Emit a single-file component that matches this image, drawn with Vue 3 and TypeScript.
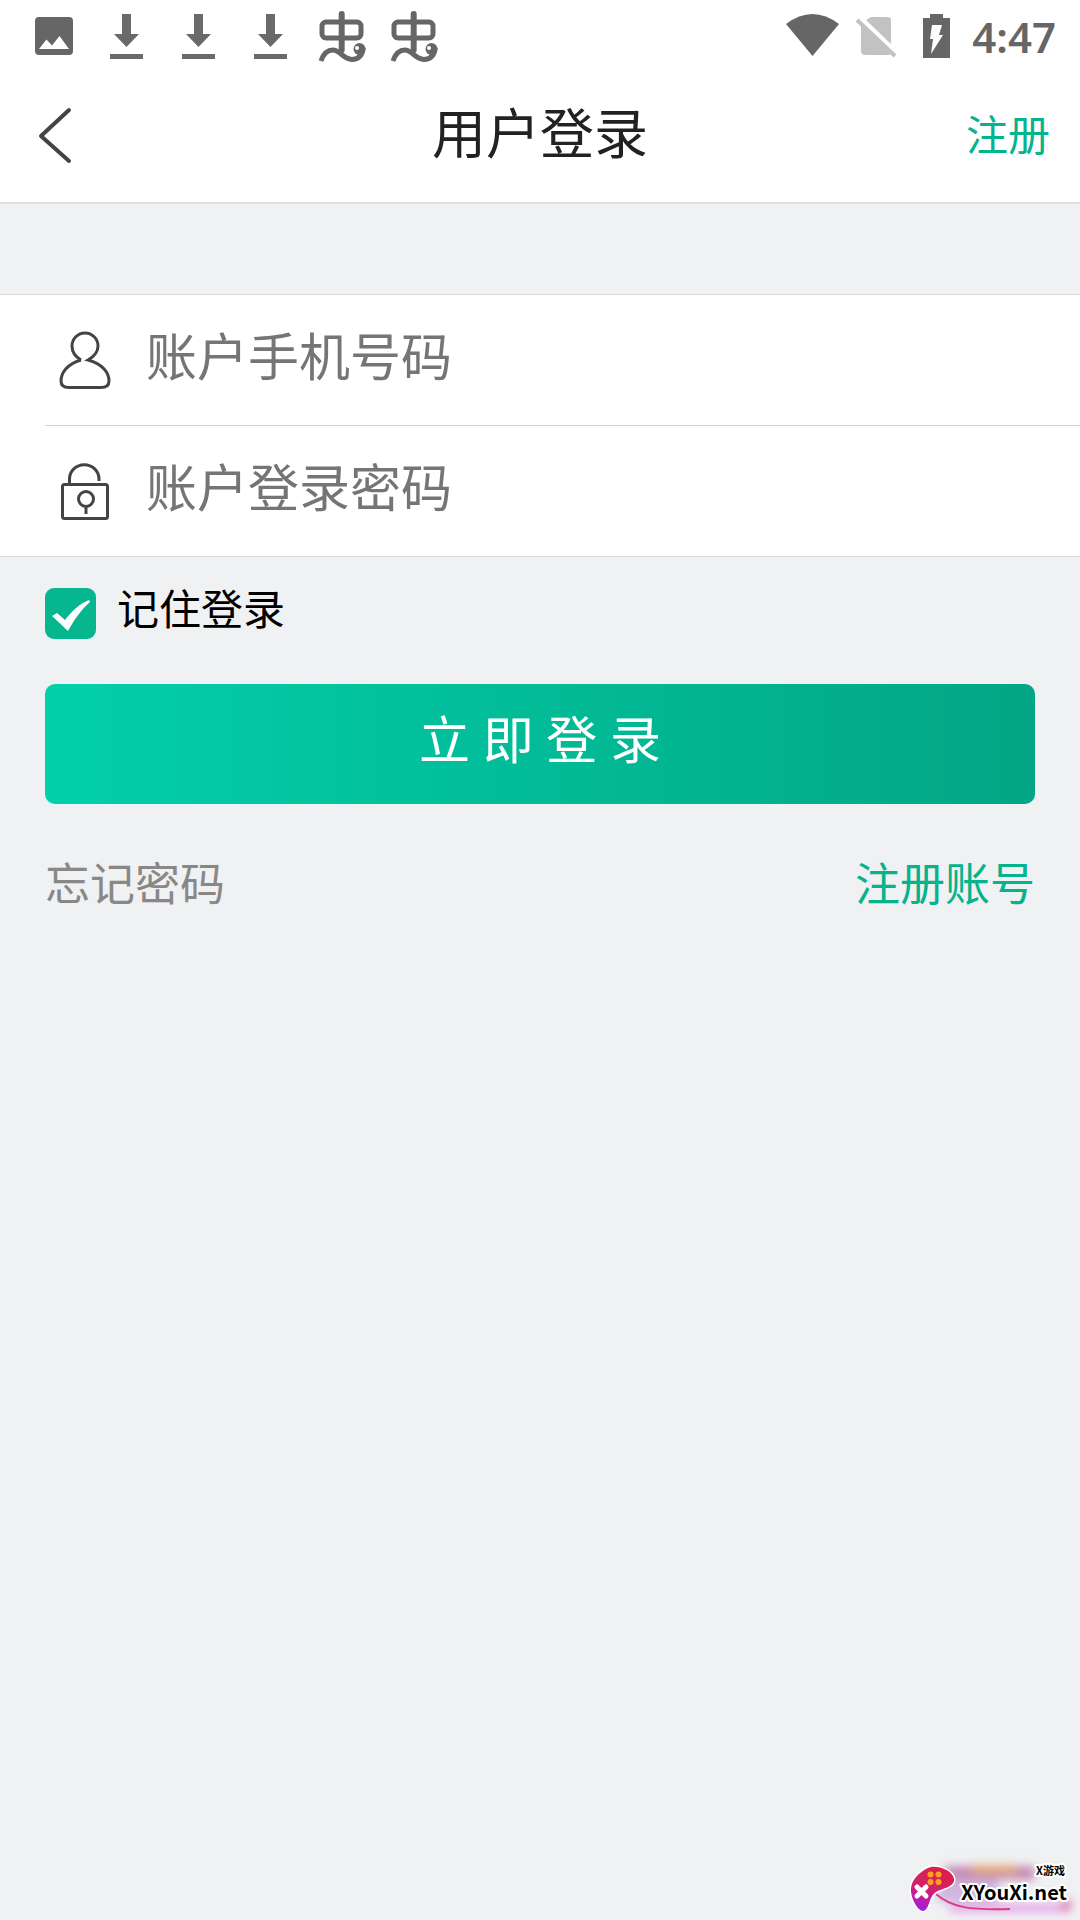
<script setup lang="ts">
import { ref } from 'vue'

const phone = ref('')
const password = ref('')
const remember = ref(true)
const downloads = [1, 2, 3]
const debugNotices = [1, 2]
</script>

<template>
  <div class="page">
    <div class="status">
      <div class="status-side">
        <svg class="cell" viewBox="0 0 72 72" aria-hidden="true">
          <path fill="#666" fill-rule="evenodd" d="M21 17h30a4 4 0 0 1 4 4v30a4 4 0 0 1-4 4H21a4 4 0 0 1-4-4V21a4 4 0 0 1 4-4ZM21 49H51L41.500 36 34 45.500 28.500 39.500Z" />
        </svg>
        <svg v-for="n in downloads" :key="n" class="cell" viewBox="0 0 72 72" aria-hidden="true">
          <path fill="#6a6a6a" d="M32 14h9v20h8L36.500 47 24 34h8ZM20 54h33v5H20Z" />
        </svg>
        <svg v-for="n in debugNotices" :key="n" class="cell" viewBox="0 0 72 72" aria-hidden="true">
          <g fill="none" stroke="#666" stroke-width="5" stroke-linecap="round">
            <rect x="16" y="22" width="39" height="16" rx="4" />
            <path d="M35.700 14V50" stroke-width="6" />
            <path d="M15 61C18 52 23 50 27 50C34 50 37 59 46 59.500C53 59.500 57 54 57 48" stroke-linecap="butt" />
          </g>
          <circle cx="53.500" cy="49" r="6" fill="#666" />
          <circle cx="51" cy="48" r="2" fill="#fff" />
        </svg>
      </div>
      <div class="status-side right">
        <svg class="cell small" viewBox="0 0 62 72" aria-hidden="true">
          <path fill="#666" d="M4 24Q30.500 4 57 24L30.500 56Z" />
        </svg>
        <svg class="cell small" viewBox="0 0 62 72" aria-hidden="true">
          <path fill="#c2c2c2" d="M27 17H43Q47 17 47 20V44L22 20ZM18 25 47 54Q46 55 44 55H21Q17 55 17 51V25Z" />
          <path d="M13 20 51 56" stroke="#c2c2c2" stroke-width="4" />
        </svg>
        <svg class="cell small" viewBox="0 0 62 72" aria-hidden="true">
          <path fill="#666" d="M24 14H37V18H44V58H17V18H24Z" />
          <path fill="#fff" d="M26 25H36L33 35H37L25 54L27 39H24Z" />
        </svg>
        <span class="clock">4:47</span>
      </div>
    </div>

    <header class="header">
      <button class="back" type="button" aria-label="返回">
        <svg width="42" height="60" viewBox="0 0 42 60" aria-hidden="true">
          <path d="M39 5 11 31 39 56" fill="none" stroke="#444" stroke-width="4" stroke-linecap="round" stroke-linejoin="round" />
        </svg>
      </button>
      <h1>用户登录</h1>
      <a class="register" href="#register">注册</a>
    </header>

    <form @submit.prevent>
      <div class="fields">
        <div class="field">
          <label for="phone" aria-label="账户手机号码">
            <svg width="56" height="64" viewBox="0 0 56 64" aria-hidden="true">
              <path d="M25 34C18 30 16 25 16 20A13 13 0 0 1 42 20C42 25 39 30 32 34C47 38 53 47 53 55Q53 61.500 45 61.500H13Q5 61.500 5 55C5 47 11 38 25 34" fill="none" stroke="#444" stroke-width="3" />
            </svg>
          </label>
          <input id="phone" v-model="phone" type="tel" placeholder="账户手机号码" />
        </div>
        <div class="field">
          <label for="password" aria-label="账户登录密码">
            <svg width="56" height="64" viewBox="0 0 56 64" aria-hidden="true">
              <g fill="none" stroke="#444" stroke-width="3">
                <rect x="6.500" y="27.500" width="45" height="34" rx="2" />
                <path d="M13.500 27V22A14.500 14 0 0 1 43 22V24" />
                <circle cx="30" cy="42" r="7.500" />
                <path d="M30 50V57" />
              </g>
            </svg>
          </label>
          <input id="password" v-model="password" type="password" placeholder="账户登录密码" />
        </div>
      </div>

      <div class="actions">
        <div class="remember">
          <span class="tick">
            <input id="remember" v-model="remember" type="checkbox" />
            <svg v-if="remember" viewBox="0 0 51 51" aria-hidden="true">
              <path fill="#fff" d="M7 28 12 25 20 32C27 23 34 16 44 12L45 14C36 22 29 32 23 43Z" />
            </svg>
          </span>
          <label for="remember">记住登录</label>
        </div>
        <button class="submit" type="submit">立 即 登 录</button>
        <div class="links">
          <a class="forgot" href="#forgot">忘记密码</a>
          <a href="#register">注册账号</a>
        </div>
      </div>
    </form>

    <svg class="mark" width="190" height="70" viewBox="0 0 190 70" role="img" aria-label="X游戏 XYouXi.net">
      <defs>
        <linearGradient id="pad" x1="0.600" y1="0" x2="0.300" y2="1">
          <stop offset="0" stop-color="#dc1f45" />
          <stop offset="0.500" stop-color="#d3206b" />
          <stop offset="1" stop-color="#a41ee0" />
        </linearGradient>
        <filter id="soft" x="-30%" y="-80%" width="160%" height="260%">
          <feGaussianBlur stdDeviation="5" />
        </filter>
      </defs>
      <g filter="url(#soft)">
        <rect x="55" y="16" width="90" height="14" fill="#c58bb4" />
        <rect x="82" y="15" width="45" height="9" fill="#e3a77c" />
        <rect x="48" y="30" width="60" height="22" fill="#cdb6dd" />
        <rect x="60" y="54" width="116" height="8" fill="#e6a2e6" />
        <rect x="172" y="50" width="9" height="11" fill="#d879a8" />
      </g>
      <path d="M46 44C62 58 80 60 120 59" fill="none" stroke="#dc3c80" stroke-width="2" />
      <path d="M41 17C50 16 63 21 64 29C65 37 53 38 46 42C38 47 40 60 33 61C27 61 20 46 21 38C22 28 33 19 41 17Z" fill="url(#pad)" stroke="#fff" stroke-width="3" paint-order="stroke" />
      <g fill="#ffa01e">
        <circle cx="40.500" cy="24.500" r="3" /><circle cx="48.500" cy="24.500" r="3" />
        <circle cx="40.500" cy="32" r="3" /><circle cx="48.500" cy="32" r="3" />
      </g>
      <path d="M27 37 36 46M36 37 27 46" stroke="#fff" stroke-width="5" stroke-linecap="round" />
      <text class="mark-small" x="146" y="25">X游戏</text>
      <text class="mark-name" x="71" y="50">XYouXi.net</text>
    </svg>
  </div>
</template>

<style>
body {
  margin: 0;
  background: #f0f1f3;
}
</style>

<style scoped>
.page {
  position: relative;
  min-height: 100vh;
  background: #f0f1f3;
  color: #000;
  font-family: "Noto Sans CJK SC", "Noto Sans", sans-serif;
}
button,
input {
  font-family: inherit;
}
a {
  color: #05b38d;
  text-decoration: none;
}
.status {
  display: flex;
  justify-content: space-between;
  height: 72px;
  padding: 0 24px 0 18px;
  background: #fff;
}
.status-side {
  display: flex;
}
.cell {
  width: 72px;
  height: 72px;
}
.cell.small {
  width: 62px;
}
.clock {
  margin-left: 4px;
  font: 600 42px/74px "Noto Sans", sans-serif;
  color: #666;
}
.header {
  display: grid;
  grid-template-columns: 1fr auto 1fr;
  align-items: center;
  height: 130px;
  padding: 0 30px;
  border-bottom: 2px solid #dedfe0;
  background: #fff;
}
.back {
  justify-self: start;
  display: flex;
  padding: 0 0 4px;
  border: 0;
  background: none;
}
h1 {
  margin: 0;
  padding-bottom: 12px;
  font-size: 54px;
  font-weight: 400;
  line-height: 64px;
  color: #222;
}
.register {
  justify-self: end;
  padding-bottom: 8px;
  font-size: 42px;
  line-height: 60px;
}
.fields {
  margin-top: 90px;
  border: solid #d6d7d8;
  border-width: 1px 0;
  background: #fff;
}
.field {
  display: flex;
  align-items: center;
  height: 130px;
  margin-left: 45px;
  padding-left: 11px;
}
.field + .field {
  border-top: 1px solid #d2d2d2;
}
.field label {
  display: flex;
  padding-bottom: 4px;
}
.field input {
  flex: 1;
  min-width: 0;
  height: 130px;
  box-sizing: border-box;
  margin-left: 34px;
  padding: 0 0 12px;
  border: 0;
  outline: 0;
  background: none;
  font-size: 51px;
}
.field input::placeholder {
  color: #757575;
  opacity: 1;
}
.actions {
  padding: 31px 45px 0;
}
.remember {
  display: flex;
  align-items: center;
  height: 51px;
}
.tick {
  position: relative;
  width: 51px;
  height: 51px;
}
.tick input {
  display: block;
  width: 51px;
  height: 51px;
  margin: 0;
  border-radius: 9px;
  appearance: none;
  background: #fff;
}
.tick input:checked {
  background: #05b68f;
}
.tick svg {
  position: absolute;
  inset: 0;
  pointer-events: none;
}
.remember label {
  padding: 0 0 14px 21px;
  font-size: 42px;
  line-height: 51px;
}
.submit {
  display: block;
  width: 100%;
  height: 120px;
  margin-top: 45px;
  padding: 0 0 4px;
  border: 0;
  border-radius: 10px;
  background: linear-gradient(90deg, #02d0aa, #02a685);
  color: #fff;
  font: 400 51px/64px Roboto, "Noto Sans CJK SC", sans-serif;
}
.links {
  display: flex;
  justify-content: space-between;
  margin-top: 48px;
  font-size: 45px;
  line-height: 60px;
}
.forgot {
  color: #888;
}
.mark {
  position: absolute;
  right: 0;
  bottom: 0;
}
.mark text {
  paint-order: stroke;
  stroke: #fff;
  stroke-width: 4px;
  stroke-linejoin: round;
  font-weight: 700;
}
.mark-small {
  font-size: 11px;
}
.mark-name {
  font-size: 20px;
}
</style>
